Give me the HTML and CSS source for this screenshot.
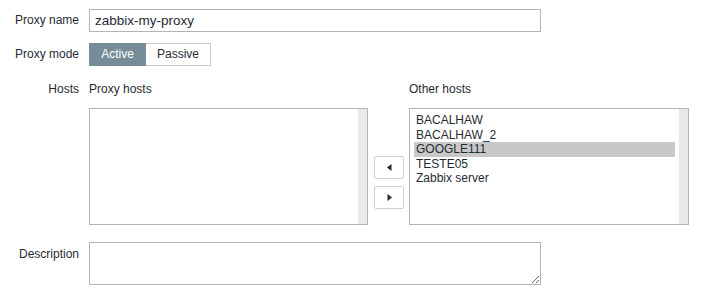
FILE: index.html
```html
<!DOCTYPE html>
<html lang="en">
  <head>
    <meta charset="UTF-8" />
    <title>Proxy</title>
    <link rel="stylesheet" href="styles.css">
  </head>
  <body>
    <div class="proxyForm">
      <div class="formRow rowName">
        <label class="formLabel">Proxy name</label>
        <div class="formField">
          <input type="text" class="nameInput" value="zabbix-my-proxy" />
        </div>
      </div>
      <div class="formRow rowMode">
        <label class="formLabel">Proxy mode</label>
        <div class="formField">
          <div class="modeSwitch">
            <span class="modeBtn active">Active</span>
            <span class="modeBtn">Passive</span>
          </div>
        </div>
      </div>
      <div class="formRow rowHosts">
        <label class="formLabel hostsLabel">Hosts</label>
        <div class="formField hostsField">
          <div class="hostsCol leftCol">
            <div class="listTitle">Proxy hosts</div>
            <div class="hostList">
              <div class="hostItems"></div>
              <div class="scrollTrack"></div>
            </div>
          </div>
          <div class="moveBtns">
            <div class="moveBtn">
              <svg width="5" height="7" viewBox="0 0 5 7"><path d="M4.5 0 L0 3.5 L4.5 7 Z" fill="#1f2c33"/></svg>
            </div>
            <div class="moveBtn">
              <svg width="5" height="7" viewBox="0 0 5 7"><path d="M0.5 0 L5 3.5 L0.5 7 Z" fill="#1f2c33"/></svg>
            </div>
          </div>
          <div class="hostsCol rightCol">
            <div class="listTitle">Other hosts</div>
            <div class="hostList">
              <div class="hostItems">
                <div class="hostItem">BACALHAW</div>
                <div class="hostItem">BACALHAW_2</div>
                <div class="hostItem selected">GOOGLE111</div>
                <div class="hostItem">TESTE05</div>
                <div class="hostItem">Zabbix server</div>
              </div>
              <div class="scrollTrack"></div>
            </div>
          </div>
        </div>
      </div>
      <div class="formRow rowDesc">
        <label class="formLabel descLabel">Description</label>
        <div class="formField">
          <textarea class="descInput"></textarea>
        </div>
      </div>
    </div>
  </body>
</html>
```

FILE: styles.css
```css
* {
  margin: 0;
  padding: 0;
  box-sizing: border-box;
}
body {
  background: #fff;
  font-family: "Liberation Sans", Arial, sans-serif;
  font-size: 12px;
  color: #1f2c33;
}
.proxyForm {
  padding-top: 9px;
  display: flex;
  flex-direction: column;
}
.formRow {
  display: flex;
  align-items: flex-start;
}
.formLabel {
  width: 79px;
  flex-shrink: 0;
  text-align: right;
  margin-right: 10px;
  line-height: 23px;
}
.formField {
  display: flex;
}
.nameInput {
  width: 452px;
  height: 23px;
  border: 1px solid #b4b4b4;
  padding: 0 5px;
  font-family: "Liberation Sans", Arial, sans-serif;
  font-size: 13.5px;
  color: #1f2c33;
  outline: none;
}
.rowMode {
  margin-top: 11px;
}
.modeSwitch {
  display: flex;
}
.modeBtn {
  height: 23px;
  line-height: 21px;
  border: 1px solid #c8c8c8;
  background: #fff;
  color: #1f2c33;
  text-align: center;
}
.modeBtn.active {
  width: 57px;
  background: #768d99;
  border-color: #768d99;
  color: #fff;
}
.modeBtn + .modeBtn {
  width: 65px;
  border-left: none;
}
.rowHosts {
  margin-top: 16px;
}
.hostsLabel {
  line-height: 14px;
}
.hostsCol {
  display: flex;
  flex-direction: column;
}
.listTitle {
  line-height: 14px;
  margin-bottom: 12px;
}
.hostList {
  height: 117px;
  border: 1px solid #b4b4b4;
  display: flex;
}
.leftCol .hostList {
  width: 279px;
}
.rightCol .hostList {
  width: 280px;
}
.hostItems {
  flex: 1;
  padding: 4px 4px 0 4px;
}
.hostItem {
  height: 14.5px;
  line-height: 14.5px;
  padding-left: 2px;
  white-space: nowrap;
}
.hostItem.selected {
  background: #c8c8c8;
}
.scrollTrack {
  width: 9px;
  background: #e9e9e9;
}
.moveBtns {
  display: flex;
  flex-direction: column;
  gap: 7px;
  padding-top: 74px;
  margin: 0 5px 0 6px;
}
.moveBtn {
  width: 30px;
  height: 23px;
  border: 1px solid #cfcfcf;
  border-radius: 2px;
  background: #fff;
  display: flex;
  align-items: center;
  justify-content: center;
}
.rowDesc {
  margin-top: 17px;
}
.descLabel {
  line-height: 14px;
  padding-top: 5px;
}
.descInput {
  display: block;
  width: 452px;
  height: 43px;
  border: 1px solid #b4b4b4;
  resize: both;
  outline: none;
}
```
